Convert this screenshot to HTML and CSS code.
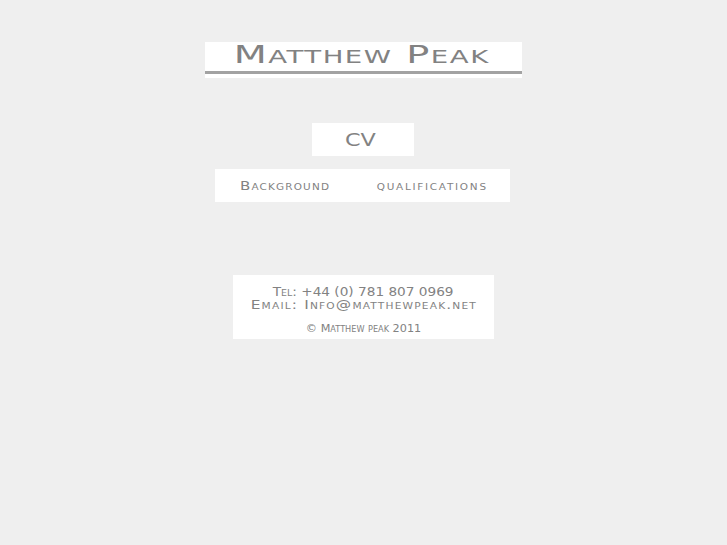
FILE: index.html
```html
<!DOCTYPE html>
<html lang="en">
    <head>
        <meta charset="UTF-8">
        <title>Matthew Peak</title>
        <link rel="stylesheet" href="styles.css">
    </head>
    <body>
        <div class="page">
            <div class="header">
                <h1 class="title"><span class="wide">Matthew Peak</span></h1>
            </div>

            <div class="cv"><span class="wide">CV</span></div>

            <div class="nav">
                <a href="#" class="nav-link wide">Background</a>
                <a href="#" class="nav-link wide">qualifications</a>
            </div>

            <div class="footer">
                <p class="contact"><span class="wide tel">Tel: +44 (0) 781 807 0969</span></p>
                <p class="contact"><span class="wide email">Email: Info@matthewpeak.net</span></p>
                <p class="copy"><span class="wide">&copy; Matthew peak 2011</span></p>
            </div>
        </div>
    </body>
</html>
```

FILE: styles.css
```css
body {
    margin: 0;
    background: #efefef;
    font-family: "DejaVu Sans", "Liberation Sans", sans-serif;
    font-variant: small-caps;
    color: #828282;
}

/* the copperplate look: stretch the letters sideways */
.wide {
    display: inline-block;
    white-space: nowrap;
}

.page {
    display: flex;
    flex-direction: column;
    align-items: center;
    padding-top: 42px;
}

.header {
    width: 317px;
    height: 36px;
    background: #fff;
}
.title {
    margin: 0;
    padding: 2px 4px 5px 0;
    border-bottom: 3px solid #a2a2a2;
    font-size: 25px;
    font-weight: normal;
    line-height: 22px;
    text-align: center;
}
.title .wide {
    letter-spacing: 1px;
    transform: scaleX(1.53);
}

.cv {
    width: 97px;
    height: 33px;
    margin: 45px 1px 0 0;
    padding-right: 5px;
    background: #fff;
    font-size: 18px;
    line-height: 33px;
    text-align: center;
}
.cv .wide {
    transform: scaleX(1.24);
}

.nav {
    display: flex;
    justify-content: space-between;
    width: 248px;
    height: 33px;
    margin: 13px 2px 0 0;
    padding: 0 22px 0 25px;
    background: #fff;
}
.nav-link {
    color: #828282;
    text-decoration: none;
    font-size: 13px;
    line-height: 33px;
    letter-spacing: 1px;
    transform: scaleX(1.16);
    transform-origin: left center;
}
.nav-link:last-child {
    letter-spacing: 1.5px;
    transform-origin: right center;
}

.footer {
    width: 261px;
    height: 64px;
    margin-top: 73px;
    background: #fff;
    text-align: center;
}
.contact {
    margin: 0;
    font-size: 13px;
    line-height: 12.5px;
}
.contact:first-child {
    padding-top: 11px;
}
.tel {
    transform: scaleX(1.05);
}
.email {
    letter-spacing: 1px;
    transform: scaleX(1.18);
}
.copy {
    margin: 12px 0 0;
    font-size: 11px;
    line-height: 12px;
}
.copy .wide {
    transform: scaleX(1.02);
}
```
